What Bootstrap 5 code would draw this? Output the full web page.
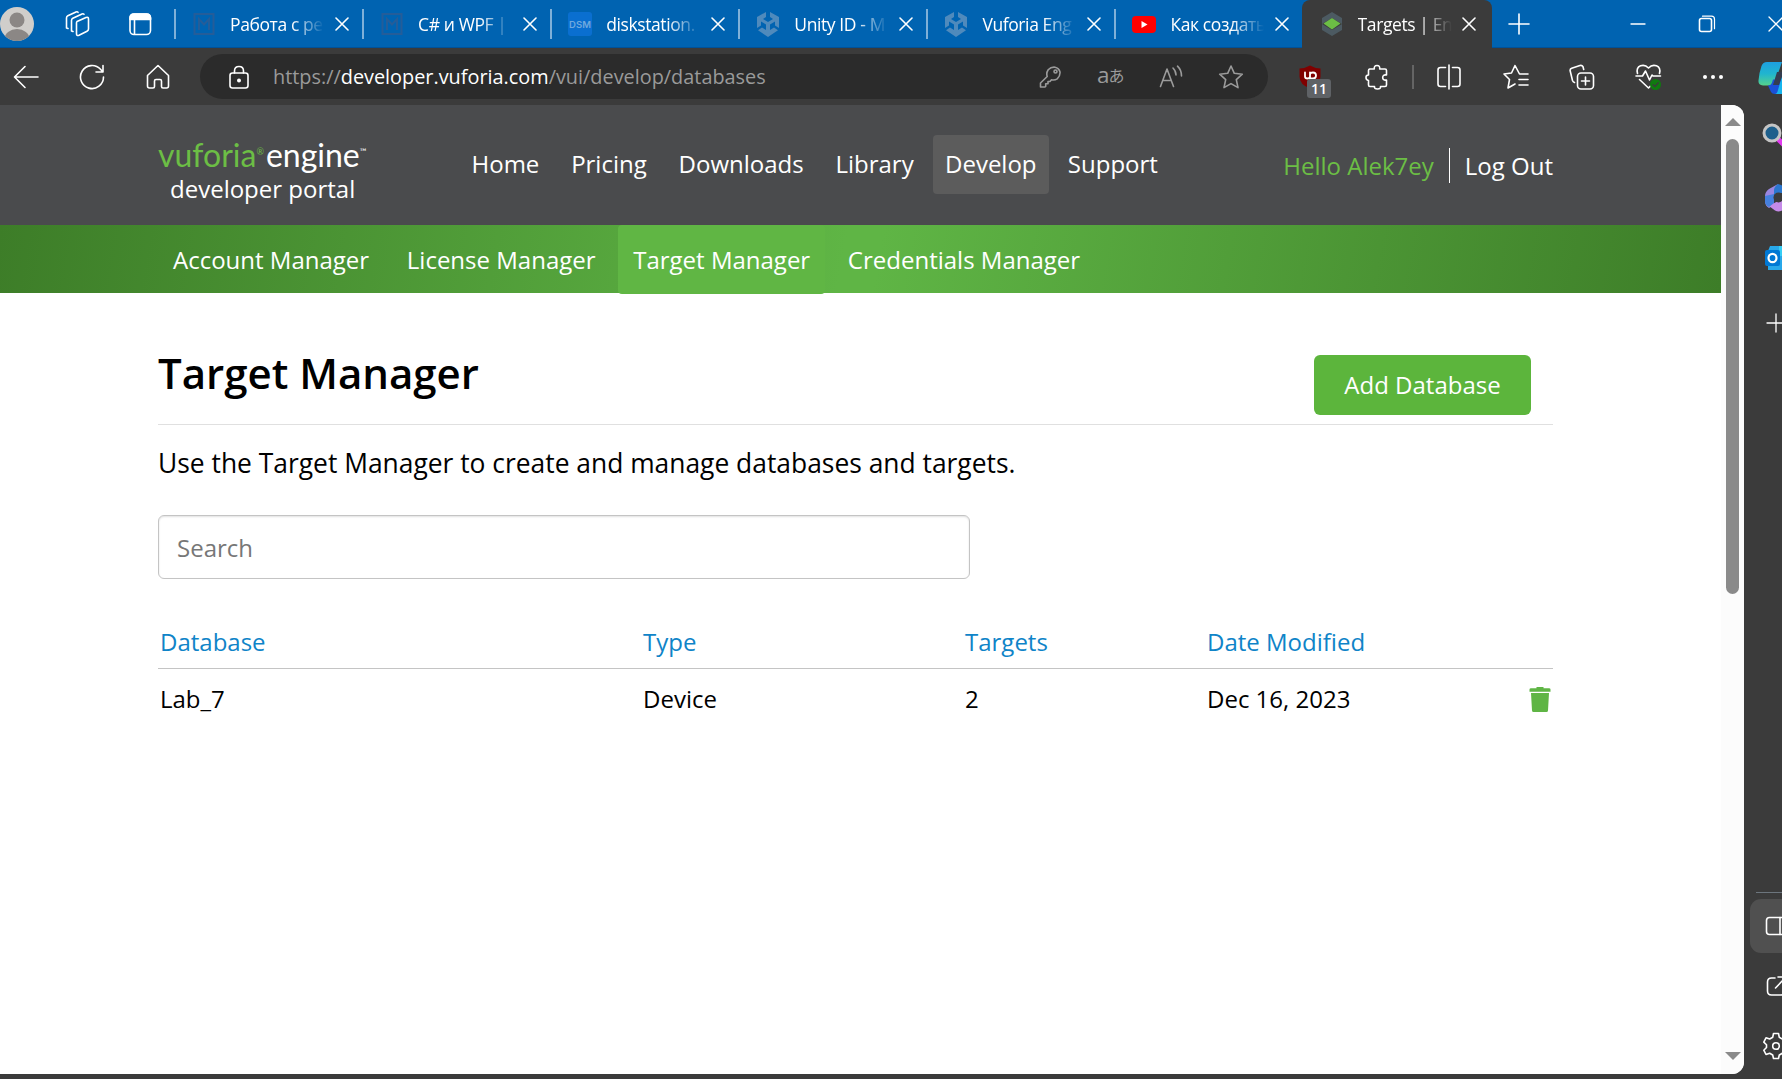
<!DOCTYPE html>
<html lang="en">
<head>
<meta charset="utf-8">
<title>Targets | Engine Developer Portal</title>
<link href="https://cdn.jsdelivr.net/npm/bootstrap@5.3.0/dist/css/bootstrap.min.css" rel="stylesheet">
<style>
body{width:1782px;height:1079px;overflow:hidden;background:#3b3b3b;font-family:"Open Sans",sans-serif;color:#000}
svg{display:block;flex:none;fill:none;stroke:#fff;stroke-width:1.6;stroke-linecap:round;stroke-linejoin:round}
/* browser tabs */
.tabstrip{height:48px;background:#0063b1;border-bottom:1px solid #00529a}
.tabtools{width:175px}
.wtab{flex:none;width:188.1px;height:48px;padding-left:17px;color:#fff;font-size:17.5px;letter-spacing:-.4px;line-height:28px}
.wtab:not(.wtab-on)::before{content:"";width:2px;height:30px;background:#7fb0d8;margin-left:-18px;margin-right:16px}
.wtab svg.fav{width:24px;height:26px;margin-right:14px}
.wlabel{width:94px;overflow:hidden;white-space:nowrap;-webkit-mask-image:linear-gradient(90deg,#000 65%,transparent 100%);mask-image:linear-gradient(90deg,#000 65%,transparent 100%)}
.wclose{margin-left:10.5px}
.wtab-on{width:190px;background:#3b3b3b;border-radius:8px 8px 0 0;margin-left:-2px;padding-left:18px}
/* toolbar */
.toolbar{height:57px}
.toolbar>*{flex:none}
.omnibox{width:1068px;height:45px;border-radius:23px;background:#2b2b2b;padding-left:28px;padding-right:24px}
.address{font-size:19.87px;line-height:30px;color:#9a9a9a;margin-left:23px;white-space:nowrap}
.address b{color:#fff;font-weight:400}
.dim svg{stroke:#9b9b9b}
.extcount{left:8px;top:14px;width:24px;height:19px;background:#5f6266;border-radius:3px;color:#fff;font:600 14px/19px "Open Sans",sans-serif;text-align:center}
/* page */
.viewport{width:1744px;height:969px;background:#fff;border-radius:0 12px 12px 0;overflow:hidden}
.sitepage{width:1721px}
.sitehead{height:120px;background:#4a4b4d;padding-left:158px;font-size:24px;line-height:32px;color:#fff}
.brandbox{width:301px;padding-top:31px}
.brandname{font-family:Lato,sans-serif;font-size:32px;line-height:38px;height:37px;white-space:nowrap}
.brandname i{font-style:normal;color:#6cbe45;margin-right:2px}
.brandname small{font-size:9px;vertical-align:12px;line-height:1}
.mainnav{margin-top:30px;height:59px}
.mainnav a{color:#fff;text-decoration:none;padding:0 12.5px;height:59px;line-height:58px;margin-right:6.8px;border-radius:4px}
.mainnav a.on{background:#5c5c5c;padding:0 12px}
.hello{color:#6cbe45}
.userbox{margin:42px 168px 0 0;height:36px;line-height:37px}
.userbox .vr{width:1px;background:#fff;opacity:1;margin:1px 15px 0 15px;height:35px}
.subnav{height:68px;padding-left:158px;background:linear-gradient(100deg,#3d7d28 0%,#5fb545 49%,#5fb545 51%,#3d7d28 100%)}
.subnav a{color:#fff;text-decoration:none;font-size:24px;line-height:69px;padding:0 15px;height:69px;margin-right:7.7px;border-radius:4px;white-space:nowrap}
.subnav a.on{background:#60b644}
.maincol{padding:0 168px 0 158px}
.titlebar{height:132px;border-bottom:1px solid #e0e0e0}
.titlebar h1{font-size:42px;font-weight:600;line-height:60px;margin-top:50px;margin-bottom:0}
.addbtn{margin:62px 22px 0 0;width:217px;height:60px;border-radius:6px;background:#5cb53c;border:0;color:#fff;font-size:24px;padding:0;line-height:60px}
.introtext{font-size:26.4px;line-height:40px;margin:18px 0 0;white-space:nowrap}
.searchbox{width:812px;height:64px;margin-top:32px;border:1px solid #c4c4c4;border-radius:6px;font-size:24px;padding:0 18px;color:#000;box-shadow:inset 0 1px 2px rgba(0,0,0,.12)}
.searchbox::placeholder{color:#777;opacity:1}
.dbtable{margin:36px 0 0;width:1395px;table-layout:fixed;font-size:24px;line-height:36px;--bs-table-bg:transparent;--bs-table-color:#000}
.dbtable th,.dbtable td{padding:12px 2px 8px;border:0;font-weight:400;color:#000}
.dbtable th{color:#0f84c8;padding:9px 2px 8px;border-bottom:1px solid #c4c4c4}
/* scrollbar and sidebar */
.scroller{width:23px;background:#fcfcfc;padding-top:13px;padding-bottom:14px}
.scroller svg{fill:#8a8a8a;stroke:none}
.thumb{width:13px;height:455px;border-radius:7px;background:#8a8a8a;margin-top:13px}
.edgebar{width:38px;height:974px;overflow:hidden}
.sidebtn{width:60px;height:54px;background:#505050;border-radius:11px;margin-left:6px;padding-left:15px}
</style>
</head>
<body>
<svg width="0" height="0" class="position-absolute">
<defs>
<symbol id="x" viewBox="0 0 14 14"><path d="M1 1l12 12M13 1L1 13"/></symbol>
<symbol id="m" viewBox="0 0 24 26"><path d="M2.500 3h19v20h-19zM7 19V8l5 5.500 5-5.500v11" stroke="#245d99" stroke-width="2" stroke-linecap="butt" stroke-linejoin="miter"/></symbol>
<symbol id="unity" viewBox="0 0 24 26"><path d="M10 1V6L7 8l5 3 5-3-3-2V1l9 5v11l-4-2.500v-4l-5 3V19l4-2.500 4 2.800L12 26 2 19.300l4-2.800 4 2.500v-5.500l-5-3v4L1 17V6z" fill="#4f8abc" stroke="none"/></symbol>
</defs>
</svg>

<div class="tabstrip d-flex">
  <div class="tabtools d-flex align-items-center flex-shrink-0">
    <svg width="34" height="34" viewBox="0 0 34 34"><g stroke="none"><clipPath id="av"><circle cx="17" cy="17" r="17"/></clipPath><circle cx="17" cy="17" r="17" fill="#d0cecb"/><circle cx="17" cy="13" r="7.500" fill="#8b8785"/><ellipse cx="17" cy="32" rx="12.500" ry="10" fill="#8b8785" clip-path="url(#av)"/></g></svg>
    <svg class="ms-4" width="38" height="26" viewBox="-6 0 38 26"><path d="M13 10.500l9-4q2.500-.8 2.500 1.500v10q0 1.500-1.500 2.200l-8 4q-2.500 1-2.500-1.500V12q0-1 .5-1.500zM9 20.500l-1.500-.5V9.500q0-1.500 1.300-2.200L18 3q1.200-.5 2 .3M4 17.500l-1.500-.5V7q0-1.500 1.300-2.200L12 1q1.300-.5 2 .3"/></svg>
    <svg class="ms-4" width="32" height="24" viewBox="-8 0 32 24"><rect x="2" y="2" width="20.500" height="20.500" rx="4"/><path d="M2 7.500V6q0-4 4-4h12.500q4 0 4 4v1.500z" fill="#fff"/><path d="M6.500 8v14"/></svg>
  </div>
  <div class="wtab d-flex align-items-center"><svg class="fav"><use href="#m"/></svg><span class="wlabel">Работа с ре</span><svg class="wclose" width="14" height="14"><use href="#x"/></svg></div>
  <div class="wtab d-flex align-items-center"><svg class="fav"><use href="#m"/></svg><span class="wlabel">C# и WPF |</span><svg class="wclose" width="14" height="14"><use href="#x"/></svg></div>
  <div class="wtab d-flex align-items-center"><svg class="fav" viewBox="0 0 24 26"><rect y="1" width="24" height="24" rx="3" fill="#0a6fd0" stroke="none"/><text x="12" y="17" text-anchor="middle" font-family="Inter" font-size="9.500" font-weight="600" letter-spacing="0" fill="#70a9de" stroke="none">DSM</text></svg><span class="wlabel">diskstation.</span><svg class="wclose" width="14" height="14"><use href="#x"/></svg></div>
  <div class="wtab d-flex align-items-center"><svg class="fav"><use href="#unity"/></svg><span class="wlabel">Unity ID - M</span><svg class="wclose" width="14" height="14"><use href="#x"/></svg></div>
  <div class="wtab d-flex align-items-center"><svg class="fav"><use href="#unity"/></svg><span class="wlabel">Vuforia Eng</span><svg class="wclose" width="14" height="14"><use href="#x"/></svg></div>
  <div class="wtab d-flex align-items-center"><svg class="fav" viewBox="0 0 24 26"><rect y="5" width="24" height="17" rx="4" fill="#f00" stroke="none"/><path d="M9.500 10l6 3.500-6 3.500z" fill="#fff" stroke="none"/></svg><span class="wlabel">Как создать</span><svg class="wclose" width="14" height="14"><use href="#x"/></svg></div>
  <div class="wtab wtab-on d-flex align-items-center"><svg class="fav" viewBox="0 0 24 26"><g stroke="none"><path d="M12 1l10 6v6l-10-6-10 6V7zM12 25L2 19v-6l10 6 10-6v6z" fill="#4c5a62"/><path d="M12 7l8.500 5.500-8.500 6-8.500-6z" fill="#6cbe45"/></g></svg><span class="wlabel">Targets | En</span><svg class="wclose" width="14" height="14"><use href="#x"/></svg></div>
  <div class="d-flex align-items-center flex-grow-1 overflow-hidden ps-3">
    <svg width="22" height="22" viewBox="0 0 22 22"><path d="M11 1v20M1 11h20"/></svg>
    <svg width="116" height="16" viewBox="-100 0 116 16"><path d="M1 8h14" stroke-width="1.300"/></svg>
    <svg class="ms-5" width="22" height="18" viewBox="-4 0 22 18"><rect x="1.500" y="3.500" width="12" height="13" rx="2"/><path d="M4.500 1.200h9q3 0 3 3v9.500" stroke-width="1.200"/></svg>
    <svg class="ms-5" width="20" height="16" viewBox="-4 0 20 16"><path d="M1 1l14 14M15 1L1 15" stroke-width="1.300"/></svg>
  </div>
</div>

<div class="toolbar d-flex align-items-center overflow-hidden">
  <svg width="26" height="24" viewBox="0 0 26 24" style="margin-left:13px"><path d="M12 1.500L1.500 12 12 22.500M2 12h23"/></svg>
  <svg width="26" height="26" viewBox="0 0 26 26" style="margin-left:40px"><path d="M24.500 13A11.500 11.500 0 1 1 21.500 5.300L24 8M24 1.500V8h-7"/></svg>
  <svg width="24" height="26" viewBox="0 0 24 26" style="margin-left:41px"><path d="M1.500 11.500L12 1.500l10.500 10V22q0 2-2 2h-3.500q-1.500 0-1.500-1.500V17q0-1.500-1.500-1.500h-4Q8.500 15.500 8.500 17v5.500Q8.500 24 7 24H3.500q-2 0-2-2z"/></svg>
  <div class="omnibox d-flex align-items-center" style="margin-left:30px">
    <svg width="22" height="24" viewBox="0 0 22 24"><rect x="2" y="8" width="18" height="15" rx="2.500"/><path d="M6.500 8V6q0-4.500 4.500-4.500T15.500 6v2"/><circle cx="11" cy="15.500" r="1.200" fill="#fff"/></svg>
    <div class="address">https://<b>developer.vuforia.com</b>/vui/develop/databases</div>
    <div class="dim d-flex align-items-center ms-auto">
      <svg width="22" height="22" viewBox="0 0 22 22"><path d="M8.200 10.500Q7 7 9.200 3.800 12 .8 16 1.200q4 .8 5 4.800.3 4-2.800 6.800-2.700 1.800-5.700.9L11 15.500H9v2.300H6.700v2.500l-.8.700H1.500v-4z"/><circle cx="16.500" cy="5.500" r="1.500"/></svg>
      <svg width="28" height="24" viewBox="0 0 28 24" style="margin-left:36px"><g stroke="none" fill="#9b9b9b"><text x="0" y="17.500" font-family="Open Sans" font-size="22.500">a</text><text x="11.500" y="17" font-family="Noto Sans CJK JP" font-size="16">あ</text></g></svg>
      <svg width="26" height="24" viewBox="0 0 26 24" style="margin-left:34px"><path d="M1.500 21.500L8 4l6.500 17.500M3.700 15.500h8.500M14 3q3 3 3 7M18.500 1.200Q22.500 5 22.500 11"/></svg>
      <svg width="26" height="26" viewBox="0 0 26 26" style="margin-left:33px"><path d="M13 2l3.300 7.300 8 .9-6 5.400 1.700 8-7-4-7 4 1.700-8-6-5.400 8-.9z"/></svg>
    </div>
  </div>
  <div class="position-relative" style="margin-left:31px">
    <svg width="22" height="24" viewBox="0 0 22 24"><path d="M11 .5q4 2.500 10.500 3v8q0 8-10.500 12-10.500-4-10.500-12v-8q6.500-.5 10.500-3z" fill="#800000" stroke="none"/><path d="M6 7.500v4q0 2 2.500 2t2.500-2v-4M11 16V9.500q0-2 3-2t3 3-3 3h-3" stroke-width="1.800"/></svg>
    <span class="extcount position-absolute">11</span>
  </div>
  <svg width="24" height="26" viewBox="0 0 24 26" style="margin-left:44px"><path d="M4.500 5h4.800q-.5-3.500 2.700-3.500T14.700 5H20q1.500 0 1.500 1.500V11q-3.800-.6-3.800 2.500t3.800 2.500v5q0 1.500-1.500 1.500h-4.500q.5 2.500-3 2.500t-3-2.500H5q-1.500 0-1.500-1.500v-4.500Q1 16 1 13.500T3.500 11V6.500Q3.500 5 5 5"/></svg>
  <svg width="2" height="24" style="margin-left:23px"><path d="M1 0v24" stroke="#707070"/></svg>
  <svg width="26" height="26" viewBox="0 0 26 26" style="margin-left:22px"><path d="M9.500 3.500h-5q-2.500 0-2.500 2.500v14q0 2.500 2.500 2.500h5M16.500 3.500h5q2.500 0 2.500 2.500v14q0 2.500-2.500 2.500h-5M13 1v24"/></svg>
  <svg width="26" height="26" viewBox="0 0 26 26" style="margin-left:41px"><path d="M25 10h-8.500L12 1.500 8.500 9 1 10l5.500 5.500L5 24l7-4M16 15.500h9M16 21h9"/></svg>
  <svg width="26" height="26" viewBox="0 0 26 26" style="margin-left:40px"><rect x="8.500" y="9" width="16" height="16" rx="3.500"/><path d="M16.500 13v8M12.500 17h8M5.500 18.500q-1.500-.5-2-2L1.200 7q-.5-2 1.500-2.800L11 1.500q2-.5 3 1.200l.7 2.800"/></svg>
  <svg width="28" height="28" viewBox="0 0 28 28" style="margin-left:40px"><path d="M2.500 10.500Q1 4.500 5.500 2.800 10 1.200 13.500 5 17 1.200 21.500 2.800 26 4.500 24.500 10.500M1 13h6.500l3-5 4 9 2.500-5 1 1h7.500M4.500 16.500l9 8.500 2-2"/><circle cx="20.500" cy="21.500" r="5.500" fill="#0f7b0f" stroke="none"/><path d="M18 21.700l2 1.800 3.300-3.700" stroke="#3b3b3b" stroke-width="1.300"/></svg>
  <svg width="22" height="6" viewBox="0 0 22 6" style="margin-left:39px"><g fill="#fff" stroke="none"><circle cx="3" cy="3" r="2"/><circle cx="11" cy="3" r="2"/><circle cx="19" cy="3" r="2"/></g></svg>
  <svg width="24" height="38" viewBox="0 0 24 38" style="margin-left:34px"><defs><linearGradient id="cp" x1="0" y1="0" x2="0" y2="1"><stop offset="0" stop-color="#1d9fe0"/><stop offset=".5" stop-color="#20b5cf"/><stop offset="1" stop-color="#55d28c"/></linearGradient></defs><g stroke="none"><path d="M9 4h15l-7 20q-1 3.500-4 3.500H5q-5 0-4.500-5Q1 15 3.500 8 5 4 9 4z" fill="url(#cp)"/><path d="M10 27.500q3 0 4-3l1-3h9V36h-7q-3 0-4-2z" fill="#1b50d8"/><path d="M17 36q2 0 3-4l4-14v18z" fill="#16b5ee"/><path d="M19 14h5v4l-3 9h-6z" fill="#343d50"/></g></svg>
</div>

<div class="d-flex">
  <div class="viewport d-flex">
    <div class="sitepage">
      <header class="sitehead d-flex">
        <div class="brandbox"><div class="brandname"><i>vuforia<small>®</small></i><span>engine<small>™</small></span></div><div class="ps-2"><span class="ms-1">developer portal</span></div></div>
        <nav class="mainnav d-flex"><a href="#">Home</a><a href="#">Pricing</a><a href="#">Downloads</a><a href="#">Library</a><a href="#" class="on">Develop</a><a href="#">Support</a></nav>
        <div class="userbox d-flex ms-auto"><span class="hello">Hello Alek7ey</span><span class="vr"></span><span>Log Out</span></div>
      </header>
      <nav class="subnav d-flex"><a href="#">Account Manager</a><a href="#">License Manager</a><a href="#" class="on">Target Manager</a><a href="#">Credentials Manager</a></nav>
      <main class="maincol">
        <div class="titlebar d-flex justify-content-between align-items-start"><h1>Target Manager</h1><button class="btn addbtn">Add Database</button></div>
        <p class="introtext">Use the Target Manager to create and manage databases and targets.</p>
        <input class="searchbox d-block" placeholder="Search">
        <table class="table dbtable">
          <colgroup><col style="width:483px"><col style="width:322px"><col style="width:242px"><col></colgroup>
          <thead><tr><th>Database</th><th>Type</th><th>Targets</th><th>Date Modified</th></tr></thead>
          <tbody><tr><td>Lab_7</td><td>Device</td><td>2</td><td><div class="d-flex justify-content-between align-items-center"><span>Dec 16, 2023</span><svg width="22" height="25" viewBox="0 0 22 25"><path d="M.5 2.500Q.5 1.200 2 1.200h5.500V0h7v1.200H20q1.500 0 1.500 1.300v2.200H.500zM2 6h18l-1 17.500Q18.900 25 17.500 25h-13Q3.100 25 3 23.500z" fill="#5fb545" stroke="none"/></svg></div></td></tr></tbody>
        </table>
      </main>
    </div>
    <div class="scroller d-flex flex-column align-items-center">
      <svg width="16" height="8" viewBox="0 0 16 8"><path d="M0 8l8-8 8 8z"/></svg>
      <div class="thumb"></div>
      <svg class="mt-auto" width="16" height="8" viewBox="0 0 16 8"><path d="M0 0h16L8 8z"/></svg>
    </div>
  </div>
  <div class="edgebar d-flex flex-column">
    <svg width="28" height="28" viewBox="0 0 28 28" style="margin:17px 0 0 18px"><path d="M16 17l6 6" stroke="#e23bf0" stroke-width="5"/><circle cx="10" cy="11" r="8" fill="#1d5f8c" stroke="#c4c4c4" stroke-width="3"/></svg>
    <svg width="28" height="28" viewBox="0 0 28 28" style="margin:34px 0 0 21px"><g stroke="none"><path d="M13 0L4 5Q0 8 0 12v5q0 5 4 7l5-3V9z" fill="#9a86e0"/><path d="M13 0q-4 3-4 6v5l3-2h16V7L16 1z" fill="#2b77cf"/><path d="M4 22l9-5h15v4l-12 6q-3 1-6-.500z" fill="#c58ae8"/><path d="M9 10v9l-5 4Q0 21 0 17v-5z" fill="#4580dd"/><circle cx="13.500" cy="13.500" r="5" fill="#3b3b3b"/></g></svg>
    <svg width="28" height="24" viewBox="0 0 28 24" style="margin:34px 0 0 21px"><g stroke="none"><path d="M5 0h20v24H3V5z" fill="#28a8ea"/><rect x="14" width="14" height="10" fill="#35cdf5"/><rect y="4" width="15" height="16" rx="2" fill="#0078d4"/></g><ellipse cx="7.500" cy="12" rx="4" ry="4.200" stroke-width="2.200"/></svg>
    <svg width="20" height="20" viewBox="0 0 20 20" style="margin:43px 0 0 22px"><path d="M10 1v18M1 10h18" stroke-width="1.300"/></svg>
    <div style="margin:559px 0 6px 12px;height:1px" class="bg-secondary"></div>
    <div class="sidebtn d-flex align-items-center"><svg width="28" height="20" viewBox="0 0 28 20"><rect x="1.500" y="1.500" width="22" height="17" rx="3"/><path d="M15 1.500v17"/></svg></div>
    <svg width="28" height="24" viewBox="0 0 28 24" style="margin:21px 0 0 22px"><path d="M9 4H5.500Q1.500 4 1.500 8v9q0 4 4 4h9q4 0 4-4v-2M12 3h8v8M9.500 14L20 3"/></svg>
    <svg width="28" height="28" viewBox="0 0 28 28" style="margin:34px 0 0 19px"><path d="M10.500 1.500h5l.8 3.800 3 1.700 3.700-1.200 2.500 4.300-3 2.700v2.700l3 2.700-2.500 4.300-3.700-1.200-3 1.700-.8 3.500h-5l-.8-3.500-3-1.700L3 22.500.8 18.200l2.700-2.700v-2.700L.8 10.100 3 5.800 6.700 7l3-1.700z"/><circle cx="13" cy="14" r="3.300"/></svg>
  </div>
</div>
<script src="https://cdn.jsdelivr.net/npm/bootstrap@5.3.0/dist/js/bootstrap.bundle.min.js"></script>
</body>
</html>
